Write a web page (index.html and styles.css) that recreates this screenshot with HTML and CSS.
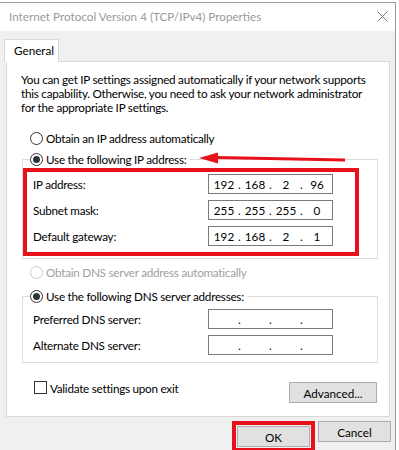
FILE: index.html
```html
<!DOCTYPE html>
<html>
  <head>
    <meta charset="UTF-8" />
    <title>Internet Protocol Version 4 (TCP/IPv4) Properties</title>
    <link rel="stylesheet" href="styles.css">
  </head>

  <body>
    <div class="window">
      <div class="title_bar">
        <span class="title_text">Internet Protocol Version 4 (TCP/IPv4) Properties</span>
        <svg class="close_icon" width="11" height="11" viewBox="0 0 11 11">
          <path d="M0.5 0.5 L10.5 10.5 M10.5 0.5 L0.5 10.5" stroke="#7a7a7a" stroke-width="1" fill="none" />
        </svg>
      </div>

      <div class="client">
        <div class="tab">General</div>
        <div class="panel">
          <p class="description">You can get IP settings assigned automatically if your network supports<br />this capability. Otherwise, you need to ask your network administrator<br />for the appropriate IP settings.</p>

          <div class="option auto_ip"><span class="radio"></span>Obtain an IP address automatically</div>

          <div class="group ip_group">
            <div class="option group_title"><span class="radio checked"></span>Use the following IP address:</div>
            <div class="highlight field_rows">
              <div class="field_row">
                <span>IP address:</span>
                <div class="ip_field"><span>192</span><i>.</i><span>168</span><i>.</i><span>2</span><i>.</i><span>96</span></div>
              </div>
              <div class="field_row">
                <span>Subnet mask:</span>
                <div class="ip_field"><span>255</span><i>.</i><span>255</span><i>.</i><span>255</span><i>.</i><span>0</span></div>
              </div>
              <div class="field_row">
                <span>Default gateway:</span>
                <div class="ip_field"><span>192</span><i>.</i><span>168</span><i>.</i><span>2</span><i>.</i><span>1</span></div>
              </div>
            </div>
          </div>

          <div class="option auto_dns disabled"><span class="radio"></span>Obtain DNS server address automatically</div>

          <div class="group dns_group">
            <div class="option group_title"><span class="radio checked"></span>Use the following DNS server addresses:</div>
            <div class="field_rows dns_rows">
              <div class="field_row">
                <span>Preferred DNS server:</span>
                <div class="ip_field"><span></span><i>.</i><span></span><i>.</i><span></span><i>.</i><span></span></div>
              </div>
              <div class="field_row">
                <span>Alternate DNS server:</span>
                <div class="ip_field"><span></span><i>.</i><span></span><i>.</i><span></span><i>.</i><span></span></div>
              </div>
            </div>
          </div>

          <div class="panel_footer">
            <label class="check_option"><span class="checkbox"></span>Validate settings upon exit</label>
            <button class="win_button advanced_btn">Advanced...</button>
          </div>
        </div>

        <div class="dialog_buttons">
          <div class="ok_highlight"><button class="win_button">OK</button></div>
          <button class="win_button">Cancel</button>
        </div>
      </div>

      <!-- annotation arrow pointing at the static IP option -->
      <svg class="arrow" width="150" height="14" viewBox="0 0 150 14">
        <path d="M17 5.5 L146 8" stroke="#e8111b" stroke-width="3" fill="none" />
        <path d="M0 6 L19 0.5 L19 11.5 Z" fill="#e8111b" />
      </svg>
    </div>
  </body>
</html>
```

FILE: styles.css
```css
body {
  margin: 0;
  background: #ffffff;
  font-family: "Lato", sans-serif;
  font-size: 11.7px;
  letter-spacing: -0.25px;
  color: #000;
}

.window {
  position: relative;
  width: 395px;
  height: 448px;
  margin-top: 2px;
  border-top: 1px solid #9a9a9a;
  border-right: 1px solid #9a9a9a;
  background: #f0f0f0;
  overflow: hidden;
}

.title_bar {
  height: 26px;
  padding: 0 7px 2px 9px;
  display: flex;
  justify-content: space-between;
  align-items: center;
  background: #ffffff;
}

.title_text {
  color: #9a9a9a;
  letter-spacing: 0;
}

.client {
  padding-top: 8px;
}

.tab {
  position: relative;
  z-index: 1;
  width: 44px;
  height: 20px;
  margin-left: 4px;
  margin-bottom: -1px;
  padding: 0 0 2px 9px;
  line-height: 20px;
  letter-spacing: 0;
  background: #ffffff;
  border: 1px solid #d9d9d9;
  border-bottom: none;
}

.panel {
  width: 382px;
  margin-left: 6px;
  padding-bottom: 13px;
  background: #ffffff;
  border: 1px solid #d9d9d9;
}

.description {
  margin: 10px 0 0 14px;
  line-height: 14px;
  white-space: nowrap;
}

.option {
  display: flex;
  align-items: center;
  height: 15px;
  line-height: 15px;
  white-space: nowrap;
}

.radio {
  box-sizing: border-box;
  width: 13px;
  height: 13px;
  margin-right: 3px;
  border: 1px solid #333;
  border-radius: 50%;
  display: flex;
  justify-content: center;
  align-items: center;
  background: #fff;
}

.radio.checked::after {
  content: "";
  width: 7px;
  height: 7px;
  border-radius: 50%;
  background: #333;
}

.auto_ip {
  margin: 17px 0 0 23px;
}

.auto_dns {
  margin: 6px 0 0 23px;
}

.disabled {
  color: #a0a0a0;
}

.disabled .radio {
  border-color: #cccccc;
}

.group {
  width: 354px;
  margin-left: 15px;
  border: 1px solid #dcdcdc;
}

.ip_group {
  margin-top: 13px;
  padding-bottom: 2px;
}

.dns_group {
  margin-top: 16px;
  padding-bottom: 7px;
}

.group_title {
  width: fit-content;
  margin: -8px 0 0 7px;
  padding-right: 3px;
  background: #fff;
}

.highlight {
  width: 312px;
  margin-top: 1px;
  padding: 2px 10px 6px 6px;
  border: 4px solid #e8111b;
}

.field_rows {
  display: flex;
  flex-direction: column;
  gap: 6px;
}

.dns_rows {
  margin-top: 5px;
  padding-left: 10px;
}

.field_row {
  display: grid;
  grid-template-columns: 175px 125px;
  align-items: center;
  height: 20px;
}

.ip_field {
  box-sizing: border-box;
  height: 20px;
  padding-left: 3px;
  display: flex;
  align-items: center;
  letter-spacing: 0;
  border: 1px solid #7a7a7a;
  background: #fff;
}

.ip_field span {
  width: 24px;
  text-align: center;
}

.ip_field i {
  width: 7px;
  font-style: normal;
  text-align: center;
}

.panel_footer {
  display: flex;
  justify-content: space-between;
  align-items: flex-start;
  margin: 18px 12px 0 27px;
}

.check_option {
  display: flex;
  align-items: center;
  height: 13px;
}

.checkbox {
  box-sizing: border-box;
  width: 13px;
  height: 13px;
  margin-right: 3px;
  border: 1px solid #333;
  background: #fff;
}

.win_button {
  box-sizing: border-box;
  height: 21px;
  padding: 0;
  font-family: inherit;
  font-size: 11.7px;
  color: #000;
  background: #e1e1e1;
  border: 1px solid #adadad;
}

.advanced_btn {
  width: 88px;
  margin-top: 1px;
}

.dialog_buttons {
  display: flex;
  justify-content: flex-end;
  gap: 3px;
  margin-top: 4px;
  padding-right: 4px;
}

.dialog_buttons .win_button {
  width: 73px;
}

.ok_highlight {
  padding: 1px;
  border: 4px solid #e8111b;
}

.arrow {
  position: absolute;
  left: 199px;
  top: 149px;
}
```
